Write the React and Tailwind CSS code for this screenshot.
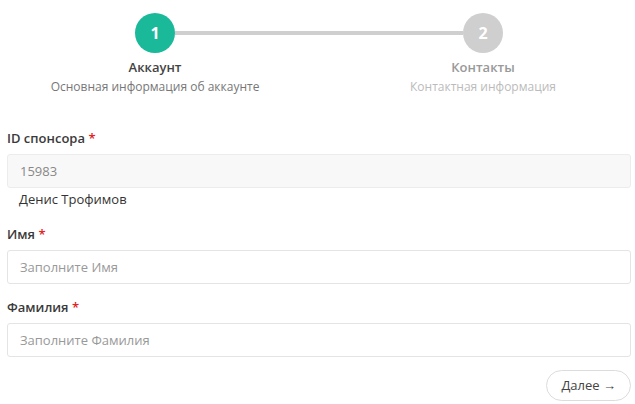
import React from 'react'

function Field({ label, placeholder, value, disabled }) {
  return (
    <div className="flex flex-col">
      <label className="text-[13px] font-semibold text-[#3a3a3a] leading-[18px] mb-[7px]">
        {label} <span className="text-[#e02222]">*</span>
      </label>
      <input
        readOnly
        value={value}
        placeholder={placeholder}
        className={
          'h-[34px] w-full rounded-[3px] border px-[12px] text-[13px] outline-none placeholder:text-[#999] ' +
          (disabled ? 'bg-[#f8f8f8] border-[#ececec] text-[#888]' : 'bg-white border-[#e4e4e4] text-[#555]')
        }
      />
    </div>
  )
}

export default function App() {
  return (
    <div className="w-[635px] h-[404px] bg-white overflow-hidden" style={{ fontFamily: '"Open Sans", sans-serif' }}>
      {/* stepper */}
      <div className="pt-[13px]">
        <div className="flex items-center ml-[135px] mr-[132px]">
          <div className="h-[40px] w-[40px] shrink-0 rounded-full bg-[#19b99a] flex items-center justify-center text-white text-[16px] font-bold">1</div>
          <div className="h-[4px] flex-1 bg-[#cfcfcf]"></div>
          <div className="h-[40px] w-[40px] shrink-0 rounded-full bg-[#cfcfcf] flex items-center justify-center text-white text-[16px] font-bold">2</div>
        </div>
        <div className="flex mt-[5px]">
          <div className="w-[310px] shrink-0 flex flex-col items-center">
            <div className="text-[13px] font-semibold text-[#444] leading-[18px]">Аккаунт</div>
            <div className="text-[12px] text-[#777] leading-[18px] mt-[2px]">Основная информация об аккаунте</div>
          </div>
          <div className="w-[220px] shrink-0 ml-[63px] flex flex-col items-center">
            <div className="text-[13px] font-semibold text-[#999] leading-[18px]">Контакты</div>
            <div className="text-[12px] text-[#bbb] leading-[18px] mt-[2px]">Контактная информация</div>
          </div>
        </div>
      </div>

      {/* form */}
      <div className="pl-[7px] pr-[4px] mt-[33px]">
        <Field label="ID спонсора" value="15983" disabled />
        <div className="text-[13px] text-[#333] pl-[12px] mt-[2px] leading-[18px]">Денис Трофимов</div>
        <div className="mt-[17px]">
          <Field label="Имя" placeholder="Заполните Имя" />
        </div>
        <div className="mt-[14px]">
          <Field label="Фамилия" placeholder="Заполните Фамилия" />
        </div>
        <div className="flex justify-end mt-[13px]">
          <button className="h-[31px] px-[14px] rounded-full border border-[#dcdcdc] bg-white text-[13px] text-[#444]">
            Далее →
          </button>
        </div>
      </div>
    </div>
  )
}
